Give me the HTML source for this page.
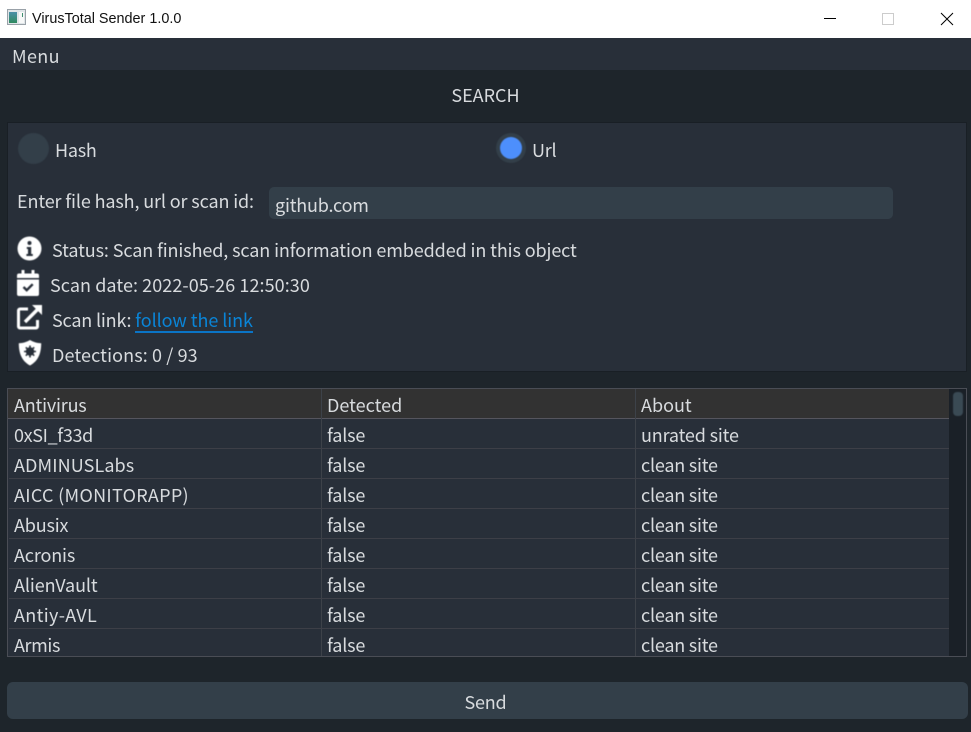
<!DOCTYPE html>
<html><head><meta charset="utf-8"><style>
*{box-sizing:border-box}
html,body{margin:0;padding:0}
body{width:971px;height:732px;overflow:hidden;position:relative;background:#1e252b;color:#d8dbde;font-family:"Noto Sans CJK JP","Liberation Sans",sans-serif;font-size:18px}
.a{position:absolute;white-space:nowrap;line-height:24px;filter:blur(.3px)}
.i{position:absolute;filter:blur(.4px)}
.panel{position:absolute;left:7px;top:122px;width:960px;height:250px;background:#282f39;border:1px solid #191f25}
.rowline{position:absolute;left:9px;width:940px;height:1px;background:#3d3f47}
.vl{position:absolute;width:1px;background:#3d4249}
.f{letter-spacing:-.2px}
.c{letter-spacing:-.22px}
</style></head><body>
<div style="position:absolute;left:0;top:0;width:971px;height:38px;background:#fff"></div>
<svg style="position:absolute;left:7px;top:9px" width="20" height="17" viewBox="0 0 20 17"><defs><linearGradient id="g" x1="0" y1="0" x2="0" y2="1"><stop offset="0" stop-color="#4a8fa8"/><stop offset="1" stop-color="#2f8a5f"/></linearGradient></defs><rect x=".5" y=".5" width="18" height="15" fill="#dfe5e8" stroke="#99a1a8"/><rect x="2" y="3" width="8" height="11" fill="url(#g)"/><rect x="12" y="3" width="5" height="11" fill="#f7f8f8"/><rect x="15" y="4" width="1" height="4" fill="#3f8f70"/></svg>
<div class="a" style="left:32px;top:7px;color:#111;font-family:'Liberation Sans',sans-serif;font-size:14.4px;filter:none">VirusTotal Sender 1.0.0</div>
<div style="position:absolute;left:824px;top:18px;width:12px;height:1px;background:#000"></div>
<div style="position:absolute;left:882px;top:13px;width:12px;height:12px;border:1px solid #ccc"></div>
<svg style="position:absolute;left:940px;top:12px" width="14" height="14" viewBox="0 0 14 14"><path d="M1 1L13 13M13 1L1 13" stroke="#000" fill="none"/></svg>

<div style="position:absolute;left:0;top:38px;width:971px;height:32px;background:#282f39"></div>
<div class="a" style="left:12px;top:44px;letter-spacing:.35px">Menu</div>
<div class="a" style="left:0;top:83px;width:971px;text-align:center">SEARCH</div>

<div class="panel"></div>
<div class="i" style="left:18px;top:133px;width:31px;height:31px;border-radius:50%;background:#333f49"></div>
<div class="a" style="left:55px;top:138px;letter-spacing:-.25px">Hash</div>
<div class="i" style="left:496px;top:133px;width:30px;height:30px;border-radius:50%;background:#333f49"></div>
<div class="i" style="left:500px;top:137px;width:22px;height:22px;border-radius:50%;background:#4d8ffc"></div>
<div class="a" style="left:532px;top:138px;letter-spacing:-.25px">Url</div>

<div class="a" style="left:17px;top:189px;letter-spacing:-.13px">Enter file hash, url or scan id:</div>
<div style="position:absolute;left:269px;top:187px;width:624px;height:32px;border-radius:5px;background:#333f49"></div>
<div class="a" style="left:275px;top:193px;letter-spacing:-.2px">github.com</div>

<svg class="i" style="left:17px;top:236px" width="25" height="25" viewBox="0 0 25 25"><circle cx="12.5" cy="12.5" r="12" fill="#fff"/><circle cx="12.5" cy="7" r="2" fill="#282f39"/><path d="M9.800 11h4.400v7h1.600v2H9.400v-2h1.600v-5H9.800z" fill="#282f39"/></svg>
<div class="a" style="left:52px;top:238px;letter-spacing:-.115px">Status: Scan finished, scan information embedded in this object</div>

<svg class="i" style="left:17px;top:270px" width="22" height="26" viewBox="0 0 22 26"><path d="M4.500 0h3v3.500h7V0h3v3.500H20a2 2 0 0 1 2 2V8H0V5.500a2 2 0 0 1 2-2h2.500z" fill="#fff"/><path d="M0 9.500h22V24a2 2 0 0 1-2 2H2a2 2 0 0 1-2-2z" fill="#fff"/><path d="M6.500 17l3.200 3.200 6-6" stroke="#282f39" stroke-width="2.400" fill="none"/></svg>
<div class="a" style="left:50px;top:273px;letter-spacing:.07px">Scan date: 2022-05-26 12:50:30</div>

<svg class="i" style="left:17px;top:305px" width="25" height="25" viewBox="0 0 25 25"><path d="M11 4H3a1.500 1.500 0 0 0-1.500 1.500v16A1.500 1.500 0 0 0 3 23h16a1.500 1.500 0 0 0 1.500-1.500V15" stroke="#fff" stroke-width="3" fill="none"/><path d="M8 17L21 4" stroke="#fff" stroke-width="3.400" fill="none"/><path d="M15 0h10v10z" fill="#fff"/></svg>
<div class="a" style="left:52px;top:308px;letter-spacing:-.18px">Scan link: <span style="color:#0a84d6;border-bottom:2px solid #0a74c6;display:inline-block;line-height:21px;letter-spacing:-.07px">follow the link</span></div>

<svg class="i" style="left:18px;top:339px" width="24" height="27" viewBox="0 0 24 27"><path d="M12 1C8.500 3.200 5 4 .8 4.300.8 14 3.500 22 12 26.500 20.500 22 23.200 14 23.200 4.300 19 4 15.500 3.200 12 1z" fill="#fff"/><circle cx="12" cy="12.500" r="4.200" fill="#282f39"/><path d="M12 6.500v12M6 12.500h12M7.800 8.300l8.400 8.400M16.200 8.300l-8.400 8.400" stroke="#282f39" stroke-width="1.600"/></svg>
<div class="a" style="left:52px;top:343px;letter-spacing:.11px">Detections: 0 / 93</div>

<div style="position:absolute;left:7px;top:388px;width:960px;height:269px;background:#282f39;border:1px solid #4a4d55"></div>
<div style="position:absolute;left:8px;top:389px;width:941px;height:29px;background:#323232"></div>
<div style="position:absolute;left:8px;top:418px;width:941px;height:1px;background:#55555e"></div>
<div style="position:absolute;left:949px;top:389px;width:17px;height:267px;background:#1a2027"></div>
<div class="i" style="left:953px;top:392px;width:10px;height:24px;border-radius:4px;background:#3a4a54"></div>
<div class="vl" style="left:321px;top:389px;height:267px"></div>
<div class="vl" style="left:635px;top:389px;height:267px"></div>
<div class="rowline" style="top:448px"></div>
<div class="rowline" style="top:478px"></div>
<div class="rowline" style="top:508px"></div>
<div class="rowline" style="top:538px"></div>
<div class="rowline" style="top:568px"></div>
<div class="rowline" style="top:598px"></div>
<div class="rowline" style="top:628px"></div>

<div class="a" style="left:14px;top:393px;letter-spacing:-.2px">Antivirus</div><div class="a" style="left:327px;top:393px">Detected</div><div class="a" style="left:641px;top:393px">About</div>
<div class="a" style="left:14px;top:423px;letter-spacing:-.33px">0xSI_f33d</div><div class="a f" style="left:327px;top:423px">false</div><div class="a" style="left:641px;top:423px;letter-spacing:-.17px">unrated site</div>
<div class="a" style="left:14px;top:453px;letter-spacing:.1px">ADMINUSLabs</div><div class="a f" style="left:327px;top:453px">false</div><div class="a c" style="left:641px;top:453px">clean site</div>
<div class="a" style="left:14px;top:483px;letter-spacing:.3px">AICC (MONITORAPP)</div><div class="a f" style="left:327px;top:483px">false</div><div class="a c" style="left:641px;top:483px">clean site</div>
<div class="a" style="left:14px;top:513px;letter-spacing:-.17px">Abusix</div><div class="a f" style="left:327px;top:513px">false</div><div class="a c" style="left:641px;top:513px">clean site</div>
<div class="a" style="left:14px;top:543px;letter-spacing:-.15px">Acronis</div><div class="a f" style="left:327px;top:543px">false</div><div class="a c" style="left:641px;top:543px">clean site</div>
<div class="a" style="left:14px;top:573px;letter-spacing:-.1px">AlienVault</div><div class="a f" style="left:327px;top:573px">false</div><div class="a c" style="left:641px;top:573px">clean site</div>
<div class="a" style="left:14px;top:603px;letter-spacing:.33px">Antiy-AVL</div><div class="a f" style="left:327px;top:603px">false</div><div class="a c" style="left:641px;top:603px">clean site</div>
<div class="a" style="left:14px;top:633px;letter-spacing:-.4px">Armis</div><div class="a f" style="left:327px;top:633px">false</div><div class="a c" style="left:641px;top:633px">clean site</div>

<div style="position:absolute;left:7px;top:682px;width:961px;height:37px;border-radius:6px;background:#333f49"></div>
<div class="a" style="left:7px;top:690px;width:957px;text-align:center;letter-spacing:-.2px">Send</div>
</body></html>
